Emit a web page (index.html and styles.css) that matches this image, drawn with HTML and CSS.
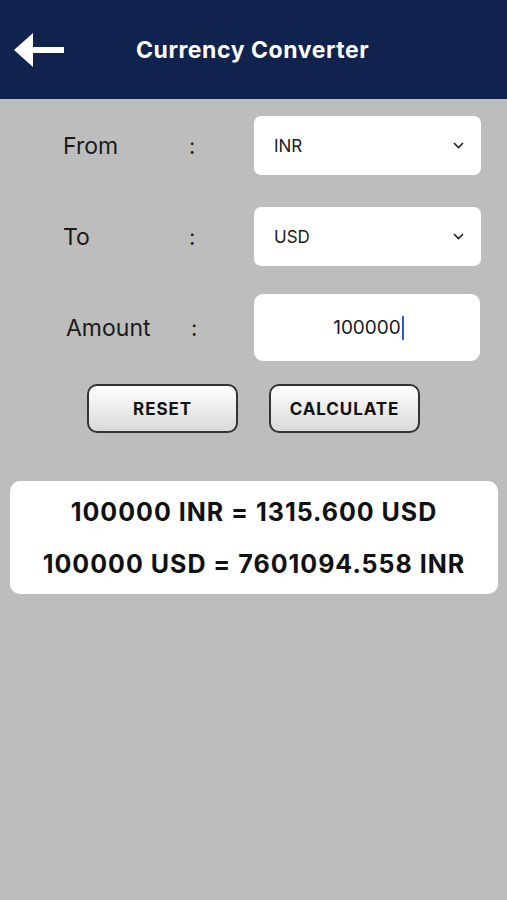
FILE: index.html
```html
<!DOCTYPE html>
<html>
<head>
<meta charset="utf-8">
<link rel="stylesheet" href="styles.css">
</head>
<body>
<header class="topbar">
  <svg class="back" width="52" height="34" viewBox="0 0 52 34">
    <path d="M0 17 L19 0 L19 14 L50 14 L50 20 L19 20 L19 34 Z" fill="#fff"/>
  </svg>
  <h1 class="title">Currency Converter</h1>
</header>
<main class="content">
  <div class="row row-from">
    <div class="label">From</div><div class="colon">:</div>
    <div class="select"><span>INR</span><svg class="chev" width="11" height="7" viewBox="0 0 11 7"><path d="M1 1 L5.5 5.5 L10 1" fill="none" stroke="#222" stroke-width="1.6"/></svg></div>
  </div>
  <div class="row row-to">
    <div class="label">To</div><div class="colon">:</div>
    <div class="select"><span>USD</span><svg class="chev" width="11" height="7" viewBox="0 0 11 7"><path d="M1 1 L5.5 5.5 L10 1" fill="none" stroke="#222" stroke-width="1.6"/></svg></div>
  </div>
  <div class="row row-amount">
    <div class="label amount-label">Amount</div><div class="colon amount-colon">:</div>
    <div class="input"><span class="value">100000</span><span class="caret"></span></div>
  </div>
  <div class="buttons">
    <button class="btn">RESET</button>
    <button class="btn">CALCULATE</button>
  </div>
  <div class="result">
    <p>100000 INR = 1315.600 USD</p>
    <p>100000 USD = 7601094.558 INR</p>
  </div>
</main>
</body>
</html>
```
FILE: styles.css
```css
* { box-sizing: border-box; }
html, body { margin: 0; padding: 0; }
body {
  width: 507px;
  height: 900px;
  background: #bdbdbd;
  font-family: Inter, "Liberation Sans", sans-serif;
  color: #111;
  overflow: hidden;
}
.topbar {
  height: 99px;
  background: #10234f;
  display: flex;
  align-items: center;
  padding-left: 14px;
}
.back { display: block; }
.title {
  margin: 0 0 0 70px;
  color: #fff;
  font-size: 23px;
  font-weight: 700;
  letter-spacing: 0.55px;
}
.content {
  padding-top: 17px;
}
.row {
  display: flex;
  align-items: center;
  padding-left: 63px;
}
.row-from { height: 59px; margin-bottom: 32px; }
.row-to { height: 59px; margin-bottom: 28px; }
.row-amount { height: 67px; }
.label {
  width: 126px;
  font-size: 23px;
  font-weight: 400;
  color: #1a1a1a;
}
.amount-label { padding-left: 3px; }
.colon {
  width: 65px;
  font-size: 22px;
  color: #1a1a1a;
}
.amount-colon { padding-left: 2px; }
.select {
  width: 227px;
  height: 59px;
  background: #fff;
  border-radius: 7px;
  display: flex;
  align-items: center;
  justify-content: space-between;
  padding: 0 17px 0 20px;
  font-size: 17px;
  color: #1a1a1a;
}
.chev { display: block; }
.input {
  height: 67px;
  width: 226px;
  background: #fff;
  border-radius: 9px;
  display: flex;
  align-items: center;
  justify-content: center;
  font-size: 19px;
  color: #1a1a1a;
  padding-left: 3px;
}
.caret {
  display: inline-block;
  width: 2px;
  height: 24px;
  background: #2a5bd7;
  margin-left: 1px;
}
.buttons {
  display: flex;
  gap: 31px;
  padding-left: 87px;
  margin-top: 23px;
}
.btn {
  width: 151px;
  height: 49px;
  border: 2px solid #333;
  border-radius: 10px;
  background: linear-gradient(#ffffff, #d9d9d9);
  font-family: Inter, "Liberation Sans", sans-serif;
  font-weight: 700;
  font-size: 17px;
  color: #111;
  letter-spacing: 0.9px;
  padding: 0;
}
.result {
  margin: 48px 9px 0 10px;
  height: 113px;
  background: #fff;
  border-radius: 10px;
  display: flex;
  flex-direction: column;
  justify-content: center;
  align-items: center;
  gap: 22px;
}
.result p {
  margin: 0;
  font-size: 25px;
  font-weight: 700;
  line-height: 30px;
  letter-spacing: 1px;
  color: #111;
}
```
